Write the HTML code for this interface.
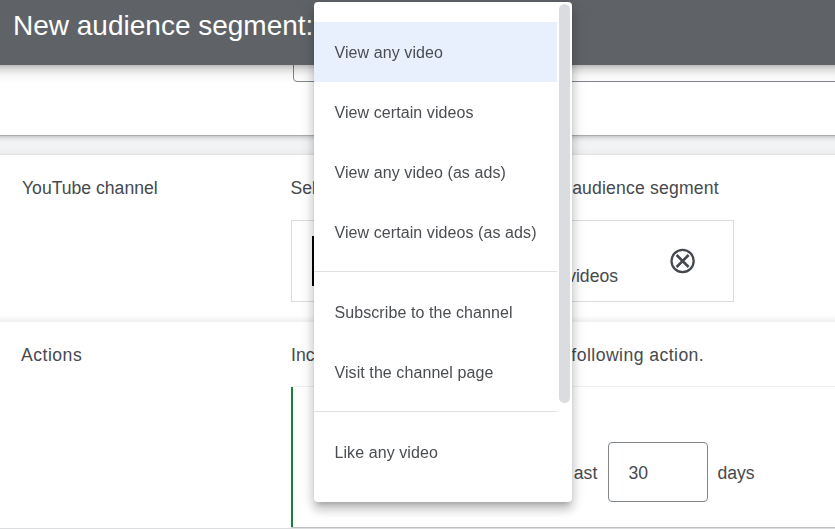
<!DOCTYPE html>
<html><head><meta charset="utf-8">
<style>
*{margin:0;padding:0;box-sizing:border-box}
html,body{width:835px;height:529px;overflow:hidden;background:#fff;font-family:"Liberation Sans",sans-serif;color:#3c4043}
body{position:relative}
div{position:absolute}
.t{white-space:nowrap}
#hdr{left:0;top:0;width:835px;height:65px;background:#5f6368;z-index:3}
#hdrsh{left:0;top:65px;width:835px;height:18px;z-index:3;background:linear-gradient(rgba(0,0,0,.26),rgba(0,0,0,.13) 25%,rgba(0,0,0,.04) 55%,rgba(0,0,0,0))}
.t[style*="#fff"]{z-index:4}
#topinput{left:293px;top:-10px;width:600px;height:92px;border:1px solid #80868b;border-radius:4px;z-index:1}
#card1bot{left:0;top:135px;width:835px;height:1px;background:#a9abae;z-index:2}
#c1sh{left:0;top:136px;width:835px;height:6px;z-index:2;background:linear-gradient(rgba(0,0,0,.16),rgba(0,0,0,.05) 50%,rgba(0,0,0,0))}
#band{left:0;top:136px;width:835px;height:19px;background:#f1f3f4}
#card2top{left:0;top:154px;width:835px;height:1px;background:#e3e4e6}
#band2{left:0;top:149px;width:835px;height:5px;background:linear-gradient(rgba(0,0,0,0),rgba(0,0,0,.03))}
#box1{left:291px;top:220px;width:443px;height:82px;border:1px solid #dadce0}
#cursor{left:312px;top:236px;width:2px;height:50px;background:#000}
#sep1{left:0;top:315px;width:835px;height:7px;background:linear-gradient(rgba(0,0,0,0),rgba(0,0,0,.025) 45%,rgba(0,0,0,.055) 80%,rgba(0,0,0,.05))}
#box2{left:291px;top:386px;width:560px;height:142px;border-top:1px solid #eeeff0;border-bottom:1px solid #bfc0c2}
#botline{left:0;top:528px;width:835px;height:1px;background:#dcdddf}
#green{left:291px;top:387px;width:2px;height:140px;background:#188038}
#daysbox{left:608px;top:442px;width:100px;height:60px;border:1px solid #80868b;border-radius:4px}
#menu{left:314px;top:2px;width:258px;height:500px;background:#fff;border-radius:4px;z-index:5;will-change:transform;
 box-shadow:0 5px 5px -3px rgba(0,0,0,.2),0 8px 10px 1px rgba(0,0,0,.14),0 3px 14px 2px rgba(0,0,0,.12)}
.hl{left:0;width:243px;background:#e8f0fe}
.msep{left:0;width:243px;height:1px;background:#e0e0e0}
#sb{left:245px;top:2px;width:11px;height:399px;background:#dadce0;border-radius:6px}
</style></head><body>
<div id="hdr"></div><div id="hdrsh"></div>
<div class="t" style="left:13px;top:12.00px;font-size:28px;line-height:28px;color:#fff;">New audience segment:</div>
<div id="topinput"></div>
<div id="card1bot"></div><div id="c1sh"></div><div id="band"></div><div id="band2"></div><div id="card2top"></div>
<div class="t" style="left:22px;top:179.60px;font-size:17.6px;line-height:17.6px;color:#46494d;">YouTube channel</div>
<div class="t" style="left:290.5px;top:179.60px;font-size:17.6px;line-height:17.6px;color:#46494d;">Select a channel to create an</div>
<div class="t" style="right:116.20000000000005px;top:179.60px;font-size:17.6px;line-height:17.6px;color:#46494d;letter-spacing:0.18px">audience segment</div>
<div id="box1"></div><div id="cursor"></div>
<div class="t" style="right:217px;top:267.80px;font-size:17.6px;line-height:17.6px;color:#46494d;">videos</div>
<svg style="position:absolute;left:667px;top:246px" width="30" height="30" viewBox="0 0 30 30"><circle cx="15.6" cy="15.0" r="11.1" fill="none" stroke="#45494e" stroke-width="2.3"/><path d="M9.6 9.0L21.6 21.0M21.6 9.0L9.6 21.0" stroke="#45494e" stroke-width="2.6"/></svg>
<div id="sep1"></div>
<div class="t" style="left:21px;top:346.60px;font-size:17.6px;line-height:17.6px;color:#46494d;letter-spacing:0.5px">Actions</div>
<div class="t" style="left:291px;top:346.60px;font-size:17.6px;line-height:17.6px;color:#46494d;">Include people who took the</div>
<div class="t" style="right:130.79999999999995px;top:346.60px;font-size:17.6px;line-height:17.6px;color:#46494d;letter-spacing:0.45px">following action.</div>
<div id="botline"></div><div id="box2"></div><div id="green"></div>
<div class="t" style="right:237.70000000000005px;top:464.80px;font-size:17.6px;line-height:17.6px;color:#46494d;">ast</div>
<div id="daysbox"></div>
<div class="t" style="left:628.5px;top:464.80px;font-size:17.6px;line-height:17.6px;color:#46494d;">30</div>
<div class="t" style="left:717.5px;top:464.80px;font-size:17.6px;line-height:17.6px;color:#46494d;">days</div>
<div id="menu">
<div class="hl" style="top:20px;height:60px"></div>
<div class="t" style="left:20.5px;top:42.86px;font-size:16px;line-height:16px;color:#4a4d51;z-index:2;letter-spacing:0.08px">View any video</div>
<div class="t" style="left:20.5px;top:102.86px;font-size:16px;line-height:16px;color:#4a4d51;z-index:2;letter-spacing:0.08px">View certain videos</div>
<div class="t" style="left:20.5px;top:162.86px;font-size:16px;line-height:16px;color:#4a4d51;z-index:2;letter-spacing:0.08px">View any video (as ads)</div>
<div class="t" style="left:20.5px;top:222.86px;font-size:16px;line-height:16px;color:#4a4d51;z-index:2;letter-spacing:0.08px">View certain videos (as ads)</div>
<div class="t" style="left:20.5px;top:302.96px;font-size:16px;line-height:16px;color:#4a4d51;z-index:2;letter-spacing:0.08px">Subscribe to the channel</div>
<div class="t" style="left:20.5px;top:363.06px;font-size:16px;line-height:16px;color:#4a4d51;z-index:2;letter-spacing:0.08px">Visit the channel page</div>
<div class="t" style="left:20.5px;top:443.16px;font-size:16px;line-height:16px;color:#4a4d51;z-index:2;letter-spacing:0.08px">Like any video</div>
<div class="msep" style="top:269px"></div><div class="msep" style="top:409px"></div>
<div id="sb"></div>
</div>
</body></html>
